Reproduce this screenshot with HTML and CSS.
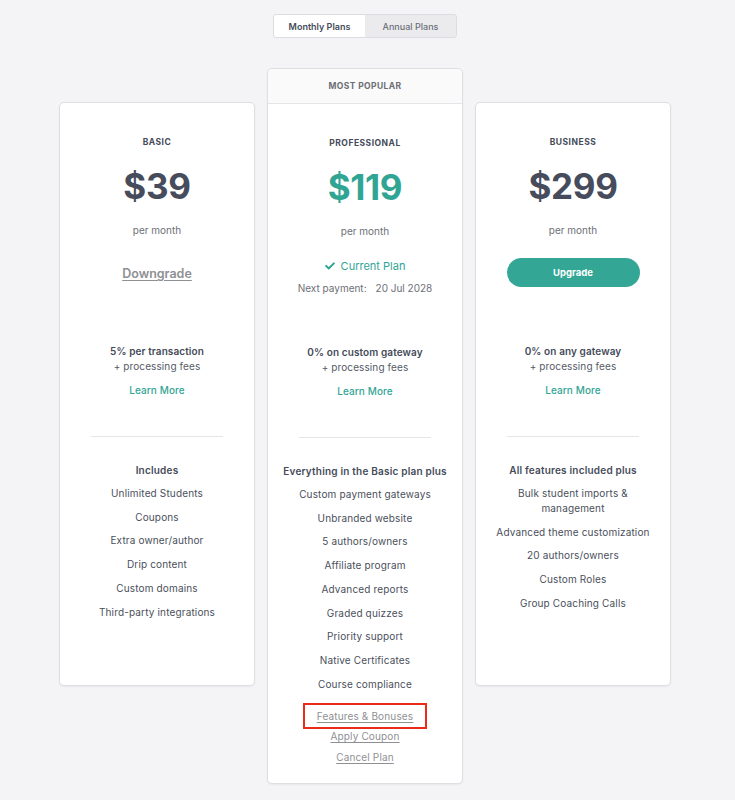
FILE: index.html
```html
<!DOCTYPE html>
<html>
<head>
<meta charset="utf-8">
<link rel="stylesheet" href="styles.css">
</head>
<body>
<div class="page">
  <div class="toggle">
    <div class="toggle-btn active">Monthly Plans</div>
    <div class="toggle-btn">Annual Plans</div>
  </div>

  <div class="plans">
    <div class="card side">
      <div class="body">
        <div class="title">BASIC</div>
        <div class="price">$39</div>
        <div class="per">per month</div>
        <div class="action">
          <a class="downgrade">Downgrade</a>
        </div>
        <div class="fee-strong">5% per transaction</div>
        <div class="fee">+ processing fees</div>
        <a class="learn">Learn More</a>
        <div class="divider"></div>
        <div class="feat-head">Includes</div>
        <ul class="features">
          <li>Unlimited Students</li>
          <li>Coupons</li>
          <li>Extra owner/author</li>
          <li>Drip content</li>
          <li>Custom domains</li>
          <li>Third-party integrations</li>
        </ul>
      </div>
    </div>

    <div class="card featured">
      <div class="popular">MOST POPULAR</div>
      <div class="body">
        <div class="title">PROFESSIONAL</div>
        <div class="price teal">$119</div>
        <div class="per">per month</div>
        <div class="action">
          <div class="current">
            <svg class="check" viewBox="0 0 512 512" width="10" height="10"><path fill="currentColor" d="M173.9 439.4l-166.4-166.4c-10-10-10-26.2 0-36.2l36.2-36.2c10-10 26.2-10 36.2 0L192 312.7 432.1 72.6c10-10 26.2-10 36.2 0l36.2 36.2c10 10 10 26.2 0 36.2L210.1 439.4c-10 10-26.2 10-36.2 0z"/></svg>
            <span>Current Plan</span>
          </div>
          <div class="next"><span>Next payment:</span><span>20 Jul 2028</span></div>
        </div>
        <div class="fee-strong">0% on custom gateway</div>
        <div class="fee">+ processing fees</div>
        <a class="learn">Learn More</a>
        <div class="divider"></div>
        <div class="feat-head">Everything in the Basic plan plus</div>
        <ul class="features">
          <li>Custom payment gateways</li>
          <li>Unbranded website</li>
          <li>5 authors/owners</li>
          <li>Affiliate program</li>
          <li>Advanced reports</li>
          <li>Graded quizzes</li>
          <li>Priority support</li>
          <li>Native Certificates</li>
          <li>Course compliance</li>
        </ul>
        <div class="links">
          <a class="small-link highlighted">Features &amp; Bonuses</a>
          <a class="small-link first-after">Apply Coupon</a>
          <a class="small-link">Cancel Plan</a>
        </div>
      </div>
    </div>

    <div class="card side">
      <div class="body">
        <div class="title">BUSINESS</div>
        <div class="price">$299</div>
        <div class="per">per month</div>
        <div class="action">
          <button class="upgrade">Upgrade</button>
        </div>
        <div class="fee-strong">0% on any gateway</div>
        <div class="fee">+ processing fees</div>
        <a class="learn">Learn More</a>
        <div class="divider"></div>
        <div class="feat-head">All features included plus</div>
        <ul class="features">
          <li>Bulk student imports &amp;<br>management</li>
          <li>Advanced theme customization</li>
          <li>20 authors/owners</li>
          <li>Custom Roles</li>
          <li>Group Coaching Calls</li>
        </ul>
      </div>
    </div>
  </div>
</div>
</body>
</html>
```

FILE: styles.css
```css
* { box-sizing: border-box; }
html, body { margin: 0; padding: 0; }
body {
  background: #f4f4f6;
  font-family: Inter, "Noto Sans", sans-serif;
  color: #454b59;
  padding-right: 5px;
}
.page {
  display: flex;
  flex-direction: column;
  align-items: center;
  padding-top: 14px;
  padding-bottom: 16px;
}
.toggle {
  display: flex;
  width: 184px;
  height: 24px;
  border: 1px solid #dcdde0;
  border-radius: 3px;
  background: #ebebee;
  overflow: hidden;
}
.toggle-btn {
  flex: 1;
  display: flex;
  align-items: center;
  justify-content: center;
  font-size: 9px;
  font-weight: 500;
  color: #6b6f78;
}
.toggle-btn.active {
  background: #fff;
  color: #454b59;
  font-weight: 600;
}
.plans {
  display: grid;
  grid-template-columns: 196px 196px 196px;
  column-gap: 12px;
  align-items: start;
  margin-top: 30px;
}
.card {
  background: #fff;
  border: 1px solid #dedfe2;
  border-radius: 5px;
  box-shadow: 0 1px 2px rgba(0,0,0,0.05);
  text-align: center;
}
.card.side {
  margin-top: 34px;
  min-height: 584px;
}
.popular {
  height: 35px;
  display: flex;
  align-items: center;
  justify-content: center;
  font-size: 8.5px;
  font-weight: 700;
  letter-spacing: 0.4px;
  color: #6b6e75;
  background: #fafafa;
  border-bottom: 1px solid #e4e5e8;
  border-radius: 5px 5px 0 0;
}
.body {
  padding: 32px 12px 15px;
  display: flex;
  flex-direction: column;
  align-items: center;
}
.title {
  font-size: 8.5px;
  font-weight: 700;
  letter-spacing: 0.5px;
  line-height: 14px;
  color: #454b59;
}
.price {
  margin-top: 15px;
  font-size: 35px;
  font-weight: 700;
  line-height: 44px;
  color: #464c5b;
  letter-spacing: -0.3px;
}
.price.teal { color: #31a594; }
.per {
  margin-top: 15px;
  font-size: 10px;
  line-height: 14px;
  color: #6e7077;
}
.action {
  margin-top: 21px;
  height: 86px;
  display: flex;
  flex-direction: column;
  align-items: center;
}
.downgrade {
  font-size: 12.5px;
  line-height: 32px;
  font-weight: 600;
  color: #8f9094;
  text-decoration: underline;
  text-underline-offset: 2px;
}
.upgrade {
  width: 133px;
  height: 29px;
  border: none;
  border-radius: 15px;
  background: #33a696;
  color: #fff;
  font-family: inherit;
  font-size: 9.5px;
  font-weight: 700;
}
.current {
  margin-top: -1px;
  display: flex;
  align-items: center;
  gap: 6px;
  height: 16px;
  font-size: 11px;
  color: #31a594;
}
.check { color: #31a594; }
.next {
  margin-top: 6px;
  height: 16px;
  line-height: 16px;
  font-size: 10px;
  color: #6e7077;
  display: flex;
  gap: 9px;
}
.fee-strong {
  font-size: 10px;
  font-weight: 600;
  line-height: 15px;
  color: #454b59;
  letter-spacing: 0.1px;
}
.fee {
  font-size: 10px;
  line-height: 15px;
  color: #555a66;
  letter-spacing: 0.1px;
}
.learn {
  margin-top: 9px;
  font-size: 10px;
  font-weight: 500;
  line-height: 15px;
  color: #31a594;
  letter-spacing: 0.1px;
}
.divider {
  margin-top: 38px;
  width: 132px;
  height: 1px;
  background: #e4e5e8;
}
.feat-head {
  margin-top: 26px;
  font-size: 10px;
  font-weight: 600;
  line-height: 15px;
  color: #454b59;
  letter-spacing: 0.2px;
}
.features {
  list-style: none;
  margin: -1px 0 0;
  padding: 0;
}
.features li {
  margin-top: 8.75px;
  font-size: 10px;
  line-height: 15px;
  color: #4a4f5b;
  letter-spacing: 0.15px;
}
.links {
  margin-top: 11.5px;
  display: flex;
  flex-direction: column;
  align-items: center;
}
.small-link {
  font-size: 10px;
  line-height: 21px;
  color: #8f9094;
  text-decoration: underline;
  text-underline-offset: 2px;
  letter-spacing: 0.15px;
}
.small-link.highlighted {
  border: 2px solid #ec2b1a;
  line-height: 22px;
  padding: 0 12px;
}
.small-link.first-after {
  margin-top: -3.5px;
}
```
